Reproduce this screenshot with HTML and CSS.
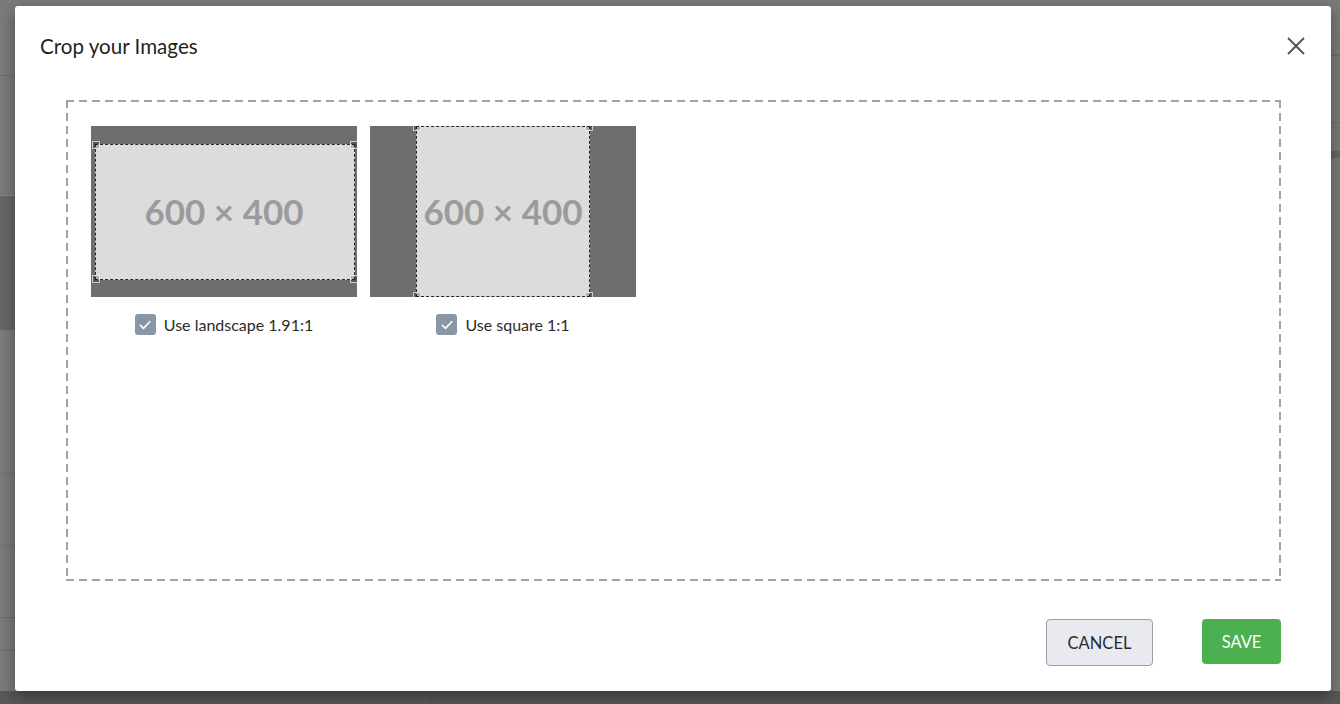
FILE: index.html
```html
<!DOCTYPE html>
<html lang="en">
<head>
<meta charset="utf-8">
<title>Crop your Images</title>
<link rel="stylesheet" href="styles.css">
</head>
<body>
<div class="backdrop"></div>
<div class="modal" role="dialog" aria-labelledby="crop-title">
  <div class="modal-header">
    <h2 class="modal-title" id="crop-title">Crop your Images</h2>
    <button class="close-btn" aria-label="Close">
      <svg width="18" height="18" viewBox="0 0 18 18"><path d="M1 1L17 17M17 1L1 17" stroke="#555" stroke-width="2" fill="none"/></svg>
    </button>
  </div>
  <div class="modal-body">
    <div class="dropzone">
      <div class="crop-item">
        <div class="crop-frame">
          <div class="placeholder">600 × 400</div>
          <div class="crop-sel sel-landscape">
            <span class="handle h-nw"></span><span class="handle h-ne"></span>
            <span class="handle h-sw"></span><span class="handle h-se"></span>
          </div>
        </div>
        <label class="check">
          <span class="box"><svg width="14" height="14" viewBox="0 0 14 14"><path d="M2.3 7.3L5.5 10.4L11.8 3.7" stroke="#fff" stroke-width="1.6" fill="none" stroke-linecap="round" stroke-linejoin="round"/></svg></span>
          <span class="check-label">Use landscape 1.91:1</span>
        </label>
      </div>
      <div class="crop-item">
        <div class="crop-frame">
          <div class="placeholder">600 × 400</div>
          <div class="crop-sel sel-square">
            <span class="handle h-nw"></span><span class="handle h-ne"></span>
            <span class="handle h-sw"></span><span class="handle h-se"></span>
          </div>
        </div>
        <label class="check">
          <span class="box"><svg width="14" height="14" viewBox="0 0 14 14"><path d="M2.3 7.3L5.5 10.4L11.8 3.7" stroke="#fff" stroke-width="1.6" fill="none" stroke-linecap="round" stroke-linejoin="round"/></svg></span>
          <span class="check-label">Use square 1:1</span>
        </label>
      </div>
    </div>
  </div>
  <div class="modal-footer">
    <button class="btn btn-cancel">CANCEL</button>
    <button class="btn btn-save">SAVE</button>
  </div>
</div>
</body>
</html>
```

FILE: styles.css
```css
* { box-sizing: border-box; }

html, body {
  margin: 0;
  height: 100%;
  overflow: hidden;
}

body {
  font-family: Lato, "Open Sans", Arial, sans-serif;
  color: #222;
}

.backdrop {
  position: fixed;
  inset: 0;
  background-color: #7b7b7b;
  background-image:
    linear-gradient(to bottom,
      transparent 0 75px, #6f6f6f 75px 76px, transparent 76px 195px,
      #8a8a8a 195px 196px, #676767 196px 330px, transparent 330px 473px,
      #727272 473px 474px, transparent 474px 545px, #727272 545px 546px,
      transparent 546px 617px, #6c6c6c 617px 618px, transparent 618px 650px,
      #6c6c6c 650px 651px, transparent 651px),
    linear-gradient(to right, transparent 0 430px, #4e4e4e 430px 431px, transparent 431px),
    linear-gradient(#585858, #585858);
  background-size: 15px 100%, 100% 13px, 100% 13px;
  background-position: 0 0, 0 100%, 0 100%;
  background-repeat: no-repeat;
}

.backdrop::after {
  content: "";
  position: absolute;
  right: 0;
  top: 0;
  width: 9px;
  height: 100%;
  background-image:
    linear-gradient(to bottom,
      transparent 0 55px, #6d6d6d 55px 56px, transparent 56px 122px,
      #6d6d6d 122px 123px, transparent 123px 151px, #686868 151px 158px,
      transparent 158px);
}

.modal {
  position: fixed;
  left: 15px;
  top: 6px;
  width: 1316px;
  height: 685px;
  background: #fff;
  border-radius: 3px;
  box-shadow: 0 5px 16px rgba(0, 0, 0, 0.4);
  display: flex;
  flex-direction: column;
}

.modal-header {
  display: flex;
  align-items: center;
  justify-content: space-between;
  padding: 28px 26px 0 25px;
  height: 52px;
}

.modal-title {
  margin: 0;
  font-size: 20.6px;
  line-height: 24px;
  font-weight: 400;
  color: #1f1f1f;
  letter-spacing: 0;
}

.close-btn {
  border: 0;
  background: none;
  padding: 0;
  width: 18px;
  height: 18px;
  display: flex;
  cursor: pointer;
}

.modal-body {
  padding: 42px 50px 0 51px;
}

.dropzone {
  height: 481px;
  padding: 26px 25px;
  display: flex;
  align-items: flex-start;
  gap: 13px;
  background:
    repeating-linear-gradient(to right, #a2a2a2 0 8px, transparent 8px 13px) left top / 100% 2px no-repeat,
    repeating-linear-gradient(to right, #a2a2a2 0 8px, transparent 8px 13px) left bottom / 100% 2px no-repeat,
    repeating-linear-gradient(to bottom, #a2a2a2 0 8px, transparent 8px 13px) left top / 2px 100% no-repeat,
    repeating-linear-gradient(to bottom, #a2a2a2 0 8px, transparent 8px 13px) right top / 2px 100% no-repeat;
}

.crop-item {
  display: flex;
  flex-direction: column;
  align-items: center;
}

.crop-frame {
  position: relative;
  width: 266px;
  height: 171px;
  background: #dcdcdc;
  overflow: hidden;
  display: flex;
  align-items: center;
  justify-content: center;
}

.placeholder {
  font-size: 35px;
  font-weight: 700;
  color: #9b9b9b;
  line-height: 1;
}

.crop-sel {
  position: absolute;
  border: 1px dashed #262626;
  box-shadow: 0 0 0 9999px rgba(0, 0, 0, 0.5);
}

.sel-landscape { left: 4px; top: 18px; width: 260px; height: 136px; }
.sel-square { left: 46px; top: 0; width: 174px; height: 171px; }

.handle {
  position: absolute;
  width: 8px;
  height: 8px;
  background: rgba(0, 0, 0, 0.2);
  border: 1px solid rgba(255, 255, 255, 0.7);
}
.h-nw { left: -4px; top: -4px; }
.h-ne { right: -4px; top: -4px; }
.h-sw { left: -4px; bottom: -4px; }
.h-se { right: -4px; bottom: -4px; }

.check {
  margin-top: 17px;
  display: flex;
  align-items: center;
  gap: 8px;
  font-size: 16px;
  line-height: 21px;
  color: #2a2a2a;
  cursor: pointer;
}

.box {
  width: 21px;
  height: 21px;
  border-radius: 3px;
  background: #8896a6;
  display: flex;
  align-items: center;
  justify-content: center;
}

.modal-footer {
  display: flex;
  justify-content: flex-end;
  align-items: flex-start;
  gap: 49px;
  padding: 38px 50px 0 0;
}

.btn {
  font-family: Lato, "Open Sans", Arial, sans-serif;
  font-size: 16.5px;
  border-radius: 4px;
  cursor: pointer;
  padding: 0 18px;
}

.btn-cancel {
  height: 47px;
  width: 107px;
  background: #e9eaef;
  border: 1px solid #99a0ab;
  color: #2b2b2b;
}

.btn-save {
  height: 45px;
  width: 79px;
  background: #4caf50;
  border: 0;
  color: #fff;
}
```
